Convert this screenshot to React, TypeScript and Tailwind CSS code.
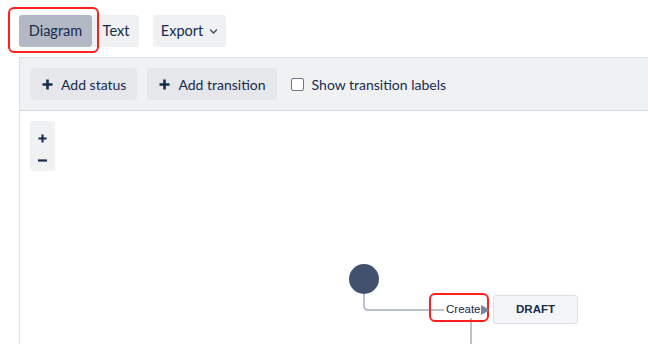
import { FaChevronDown } from "react-icons/fa";

const font = { fontFamily: "Lato, 'Noto Sans', sans-serif" };

function Plus({ size = 11 }: { size?: number }) {
  return (
    <svg width={size} height={size} viewBox="0 0 11 11">
      <path d="M5.5 0.5 V10.5 M0.5 5.5 H10.5" stroke="#172b4d" strokeWidth="2.6" />
    </svg>
  );
}

function ToolButton({ label }: { label: string }) {
  return (
    <button className="flex items-center h-8 pl-3 pr-[11px] gap-2 rounded-[3px] bg-[#e5e7eb] text-[14px] text-[#172b4d]">
      <Plus />
      <span>{label}</span>
    </button>
  );
}

export default function App() {
  return (
    <div className="w-[648px] h-[344px] overflow-hidden bg-white text-[#172b4d]" style={font}>
      {/* view switcher */}
      <div className="flex items-center h-[57px] pl-[19px] pb-[10px] pt-[15px]">
        <div className="relative flex">
          <div className="absolute -left-[11px] -top-[8px] w-[91px] h-[46px] rounded-[6px] border-2 border-[#ff1f1f]" />
          <button className="h-8 w-[73px] rounded-[3px] bg-[#b3b9c4] text-[14.5px]">Diagram</button>
          <button className="h-8 w-[47px] pl-[1px] rounded-r-[3px] bg-[#f0f1f3] text-[14.5px]">Text</button>
        </div>
        <button className="ml-[14px] h-8 w-[73px] flex items-center justify-center gap-[6px] rounded-[3px] bg-[#f0f1f3] text-[14.5px]">
          Export
          <FaChevronDown className="w-[9px] h-[9px] text-[#42526e]" />
        </button>
      </div>

      {/* editor */}
      <div className="ml-[19px] border-l border-t border-[#dcdfe4] h-[287px] flex flex-col">
        <div className="h-[53px] shrink-0 flex items-center gap-[10px] px-[10px] bg-[#f0f1f3] border-b border-[#d5d8dd]">
          <ToolButton label="Add status" />
          <ToolButton label="Add transition" />
          <label className="flex items-center gap-[8px] ml-[4px] text-[14px]">
            <span className="w-[13px] h-[13px] rounded-[2px] border border-[#6b778c] bg-white" />
            Show transition labels
          </label>
        </div>

        <div className="relative flex-1 bg-white">
          {/* zoom controls */}
          <div className="absolute left-[10px] top-[10px] w-[25px] h-[50px] rounded-[3px] bg-[#f0f1f3] flex flex-col items-center pt-[6px] overflow-visible">
            <button className="h-[24px] flex items-center" aria-label="Zoom in">
              <Plus size={9} />
            </button>
            <button className="h-[22px] flex items-center" aria-label="Zoom out">
              <svg width="9" height="9" viewBox="0 0 9 9">
                <path d="M0 4.5 H9" stroke="#172b4d" strokeWidth="2.2" />
              </svg>
            </button>
          </div>

          <svg className="absolute inset-0" width="629" height="233">
            <path d="M344 183 V195 Q344 199 348 199 H462" fill="none" stroke="#a5adba" strokeWidth="1.5" />
            <path d="M451 207 V233" fill="none" stroke="#a5adba" strokeWidth="1.5" />
            <circle cx="344" cy="168" r="15" fill="#42526e" />
          </svg>

          <div className="absolute left-[409px] top-[182px] w-[60px] h-[29px] rounded-[6px] border-2 border-[#ff1f1f] flex items-center pl-[13px] pt-[4px]">
            <span className="bg-white text-[11.5px] leading-none text-[#172b4d] px-[2px]" style={{ fontFamily: "'Liberation Sans', Arial, sans-serif" }}>Create</span>
          </div>
          <svg className="absolute left-[460px] top-[193px]" width="12" height="12">
            <path d="M1 1 L10 6 L1 11 Z" fill="#7a869a" />
          </svg>

          <div className="absolute left-[473px] top-[184px] w-[85px] h-[29px] rounded-[3px] border border-[#dfe1e6] bg-[#f4f5f7] flex items-center justify-center text-[11.5px] font-bold text-[#172b4d]" style={{ fontFamily: "'Liberation Sans', Arial, sans-serif" }}>
            DRAFT
          </div>
        </div>
      </div>
    </div>
  );
}
